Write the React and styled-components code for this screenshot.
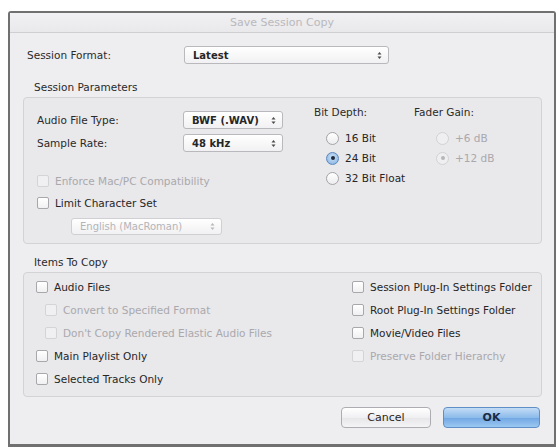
import React from "react";
import styled, { createGlobalStyle, css } from "styled-components";

const Global = createGlobalStyle`
  html, body { margin: 0; padding: 0; background: #ffffff; }
  body { font-family: "DejaVu Sans", "Liberation Sans", sans-serif; font-size: 10.5px; color: #262626; }
  * { box-sizing: border-box; }
`;

const Page = styled.div`
  width: 559px;
  height: 448px;
  padding: 11px 0 0 8px;
`;

const Window = styled.div`
  width: 548px;
  height: 436px;
  border: 2px solid #707070;
  border-bottom-width: 3px;
  border-radius: 3px 3px 0 0;
  background: #eeedf0;
  display: flex;
  flex-direction: column;
`;

const TitleBar = styled.div`
  height: 20px;
  flex: none;
  border-bottom: 1px solid #cfcfd2;
  background: linear-gradient(#f1f0f3, #e9e8eb);
  display: flex;
  align-items: center;
  justify-content: center;
  color: #b9b9bc;
  font-size: 11px;
`;

const Body = styled.div`
  padding: 13px 11px 0 14px;
  display: flex;
  flex-direction: column;
  flex: 1;
`;

const FormRow = styled.div`
  display: flex;
  align-items: center;
  height: 18px;
  margin-left: ${(p) => p.$indent || 0}px;
`;

const Label = styled.span`
  width: ${(p) => p.$w}px;
  flex: none;
  font-size: 10.5px;
  color: #2a2a2a;
  white-space: nowrap;
`;

const Popup = styled.div`
  width: ${(p) => p.$w}px;
  height: ${(p) => p.$h || 18}px;
  border: 1px solid #b9b9bd;
  border-radius: 3px;
  background: linear-gradient(#ffffff, #f1f1f3);
  display: flex;
  align-items: center;
  justify-content: space-between;
  padding: 0 6px 0 8px;
  font-size: 10px;
  font-weight: bold;
  white-space: nowrap;
  color: ${(p) => (p.$disabled ? "#b4b4b8" : "#262626")};
  ${(p) => p.$disabled && css`font-weight: normal; border-color: #d0d0d4;`}
`;

const Heading = styled.div`
  margin: ${(p) => p.$mt}px 0 3px 10px;
  font-size: 10.5px;
  color: #2a2a2a;
  height: 13px;
  line-height: 13px;
`;

const Group = styled.div`
  width: 519px;
  height: ${(p) => p.$h}px;
  margin-left: -1px;
  border: 1px solid #d3d3d6;
  border-radius: 4px;
  background: #e9e8eb;
  display: flex;
  padding: ${(p) => p.$pad};
`;

const LeftCol = styled.div`
  width: 277px;
  flex: none;
  display: flex;
  flex-direction: column;
  padding-top: ${(p) => p.$pt || 0}px;
`;

const RadioCol = styled.div`
  width: ${(p) => p.$w}px;
  flex: none;
  display: flex;
  flex-direction: column;
`;

const RadioList = styled.div`
  margin-left: ${(p) => p.$indent}px;
  display: flex;
  flex-direction: column;
`;

const ColLabel = styled.div`
  height: 14px;
  line-height: 14px;
  font-size: 10.5px;
  color: #2a2a2a;
  margin-bottom: 9px;
  white-space: nowrap;
`;

const OptionRow = styled.div`
  display: flex;
  align-items: center;
  gap: ${(p) => p.$gap || 6}px;
  height: ${(p) => p.$h || 22}px;
  margin-left: ${(p) => p.$indent || 0}px;
  font-size: 10.5px;
  white-space: nowrap;
  color: ${(p) => (p.$disabled ? "#a9a9ad" : "#262626")};
`;

const Box = styled.span`
  width: 12px;
  height: 12px;
  flex: none;
  border: 1px solid ${(p) => (p.$disabled ? "#d4d4d7" : "#a8a8ac")};
  border-radius: 2px;
  background: ${(p) => (p.$disabled ? "#f0f0f2" : "linear-gradient(#ffffff, #f0f0f2)")};
  box-shadow: ${(p) => (p.$disabled ? "none" : "inset 0 1px 0 #fff")};
`;

const Radio = styled.span`
  width: 13px;
  height: 13px;
  flex: none;
  border-radius: 50%;
  border: 1px solid ${(p) => (p.$disabled ? "#d2d2d6" : p.$on ? "#5c87bd" : "#a4a4a8")};
  background: ${(p) =>
    p.$on && !p.$disabled
      ? "radial-gradient(circle at 50% 40%, #cfe3f7, #7eaee0)"
      : p.$disabled
      ? "#efeff1"
      : "linear-gradient(#ffffff, #ededef)"};
  display: flex;
  align-items: center;
  justify-content: center;
  &::after {
    content: "";
    width: 4px;
    height: 4px;
    border-radius: 50%;
    background: ${(p) => (p.$on ? (p.$disabled ? "#b6b6ba" : "#1e2b3c") : "transparent")};
  }
`;

const Spacer = styled.div`
  height: ${(p) => p.$h}px;
  flex: none;
`;

const ItemsCol = styled.div`
  width: ${(p) => p.$w}px;
  flex: none;
  display: flex;
  flex-direction: column;
`;

const Footer = styled.div`
  display: flex;
  justify-content: flex-end;
  gap: 12px;
  margin-top: 10px;
  padding-right: 3px;
`;

const Button = styled.button`
  width: ${(p) => p.$w}px;
  height: 21px;
  border-radius: 4px;
  font-family: inherit;
  font-size: 11px;
  color: ${(p) => (p.$primary ? "#1b2b44" : "#262626")};
  border: 1px solid ${(p) => (p.$primary ? "#5f8fc6" : "#adadb1")};
  background: ${(p) =>
    p.$primary
      ? "linear-gradient(#c3dcf5 0%, #8dbbeb 50%, #6fa6e2 51%, #9cc8f2 100%)"
      : "linear-gradient(#ffffff, #f0f0f2 50%, #e6e6e9 51%, #f4f4f6)"};
  font-weight: ${(p) => (p.$primary ? "bold" : "normal")};
`;

const Arrows = ({ color = "#4a4a4a" }) => (
  <svg width="5" height="9" viewBox="0 0 5 9">
    <path d="M0.5 3.5 L2.5 1 L4.5 3.5 Z" fill={color} />
    <path d="M0.5 5.5 L2.5 8 L4.5 5.5 Z" fill={color} />
  </svg>
);

const Check = ({ label, disabled, indent }) => (
  <OptionRow $disabled={disabled} $indent={indent} $h={23}>
    <Box $disabled={disabled} />
    {label}
  </OptionRow>
);

const RadioOpt = ({ label, on, disabled }) => (
  <OptionRow $disabled={disabled} $h={20} $gap={6}>
    <Radio $on={on} $disabled={disabled} />
    {label}
  </OptionRow>
);

export default function App() {
  return (
    <>
      <Global />
      <Page>
        <Window>
          <TitleBar>Save Session Copy</TitleBar>
          <Body>
            <FormRow $indent={3}>
              <Label $w={157}>Session Format:</Label>
              <Popup $w={205}>
                Latest
                <Arrows />
              </Popup>
            </FormRow>

            <Heading $mt={17}>Session Parameters</Heading>
            <Group $h={147} $pad="7px 0 0 13px">
              <LeftCol $pt={6}>
                <FormRow>
                  <Label $w={146}>Audio File Type:</Label>
                  <Popup $w={100}>
                    BWF (.WAV)
                    <Arrows />
                  </Popup>
                </FormRow>
                <Spacer $h={5} />
                <FormRow>
                  <Label $w={146}>Sample Rate:</Label>
                  <Popup $w={100}>
                    48 kHz
                    <Arrows />
                  </Popup>
                </FormRow>
                <Spacer $h={18} />
                <OptionRow $disabled $h={22}>
                  <Box $disabled />
                  Enforce Mac/PC Compatibility
                </OptionRow>
                <OptionRow $h={22}>
                  <Box />
                  Limit Character Set
                </OptionRow>
                <Spacer $h={3} />
                <FormRow $indent={34}>
                  <Popup $w={151} $h={17} $disabled>
                    English (MacRoman)
                    <Arrows color="#b8b8bc" />
                  </Popup>
                </FormRow>
              </LeftCol>
              <RadioCol $w={100}>
                <ColLabel>Bit Depth:</ColLabel>
                <RadioList $indent={12}>
                  <RadioOpt label="16 Bit" />
                  <RadioOpt label="24 Bit" on />
                  <RadioOpt label="32 Bit Float" />
                </RadioList>
              </RadioCol>
              <RadioCol $w={100}>
                <ColLabel>Fader Gain:</ColLabel>
                <RadioList $indent={22}>
                  <RadioOpt label="+6 dB" disabled />
                  <RadioOpt label="+12 dB" on disabled />
                </RadioList>
              </RadioCol>
            </Group>

            <Heading $mt={12}>Items To Copy</Heading>
            <Group $h={125} $pad="2px 0 0 12px">
              <ItemsCol $w={316}>
                <Check label="Audio Files" />
                <Check label="Convert to Specified Format" disabled indent={9} />
                <Check label="Don't Copy Rendered Elastic Audio Files" disabled indent={9} />
                <Check label="Main Playlist Only" />
                <Check label="Selected Tracks Only" />
              </ItemsCol>
              <ItemsCol $w={190}>
                <Check label="Session Plug-In Settings Folder" />
                <Check label="Root Plug-In Settings Folder" />
                <Check label="Movie/Video Files" />
                <Check label="Preserve Folder Hierarchy" disabled />
              </ItemsCol>
            </Group>

            <Footer>
              <Button $w={90}>Cancel</Button>
              <Button $w={97} $primary>OK</Button>
            </Footer>
          </Body>
        </Window>
      </Page>
    </>
  );
}
